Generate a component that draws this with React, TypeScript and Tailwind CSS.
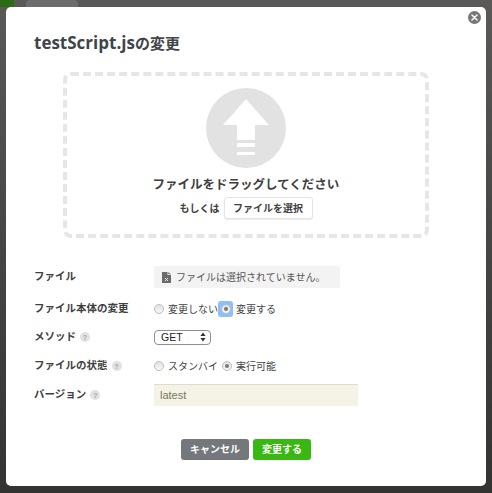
const jp = "font-['Liberation_Sans','Noto_Sans_CJK_JP',sans-serif]";

function Help() {
  return (
    <span className="ml-[4px] inline-flex h-[10px] w-[10px] items-center justify-center rounded-full bg-[#e2e2e2] text-[7px] font-bold leading-none text-[#a8a8a8]">
      ?
    </span>
  );
}

function Radio({ checked }: { checked?: boolean }) {
  return (
    <span className="flex h-[10px] w-[10px] shrink-0 items-center justify-center rounded-full border border-[#bdbdbd] bg-gradient-to-b from-[#e2e2e2] to-[#f8f8f8]">
      {checked && <span className="h-[4px] w-[4px] rounded-full bg-[#777777]" />}
    </span>
  );
}

function Row({ label, help, h, children }: { label: string; help?: boolean; h: string; children: React.ReactNode }) {
  return (
    <div className={`flex items-center ${h}`}>
      <div className="flex w-[120px] shrink-0 items-center text-[10.5px] font-bold text-[#3f3f3f]">
        {label}
        {help && <Help />}
      </div>
      {children}
    </div>
  );
}

export default function App() {
  return (
    <div className={`h-[493px] w-[492px] overflow-hidden bg-gradient-to-b from-[#5a5957] to-[#333331] ${jp}`}>
      {/* page behind the dialog */}
      <div className="flex h-[7px] items-start">
        <div className="h-[7px] w-[14px] bg-[#2c6a14]" />
        <div className="ml-[12px] h-[7px] w-[52px] rounded-t bg-[#6d6c6a]" />
      </div>

      <div className="relative mx-[6px] h-[479px] w-[480px] rounded-[5px] bg-white">
        {/* close */}
        <button className="absolute right-[5px] top-[4px] flex h-[13px] w-[13px] items-center justify-center rounded-full bg-[#777777]">
          <svg width="7" height="7" viewBox="0 0 7 7">
            <path d="M1 1l5 5M6 1L1 6" stroke="#f4f4f4" strokeWidth="1.6" strokeLinecap="round" />
          </svg>
        </button>

        <div className="px-[28px] pt-[26px]">
          <h1 className="font-['Open_Sans','Noto_Sans_CJK_JP',sans-serif] text-[15px] font-bold leading-[20px] text-[#3f454b]">
            <span className="text-[17px]">testScript.js</span>の変更
          </h1>

          {/* drop area */}
          <div className="ml-[29px] mt-[19px] flex h-[166px] w-[366px] flex-col items-center rounded-[8px] border-[4px] border-dashed border-[#e6e6e6] pt-[12px]">
            <svg width="80" height="80" viewBox="0 0 80 80" className="shrink-0">
              <circle cx="40" cy="40" r="40" fill="#e2e2e2" />
              <path d="M40 11L63 37H49V52H31V37H17Z" fill="#fff" />
              <rect x="31" y="55" width="18" height="4" fill="#fff" />
              <rect x="31" y="64" width="18" height="3" fill="#fff" />
            </svg>
            <p className="mt-[9px] text-[12.5px] font-bold leading-[16px] text-[#3f3f3f]">ファイルをドラッグしてください</p>
            <div className="mt-[4px] flex items-center gap-[4px]">
              <span className="text-[10px] font-bold text-[#3f3f3f]">もしくは</span>
              <button className="h-[22px] w-[89px] rounded-[3px] border border-[#e4e4e4] bg-white text-[10px] font-bold text-[#3f3f3f] shadow-[0_1px_1px_rgba(0,0,0,0.08)]">
                ファイルを選択
              </button>
            </div>
          </div>

          {/* form */}
          <div className="mt-[28px] flex flex-col">
            <Row label="ファイル" h="h-[22px]">
              <div className="flex h-[22px] w-[186px] items-center gap-[5px] rounded-[2px] bg-[#f3f3f3] pl-[8px] text-[10px] text-[#555555]">
                <svg width="9" height="11" viewBox="0 0 9 11" className="shrink-0">
                  <path d="M0 0H5.5V3H9V11H0Z" fill="#6b6b6b" />
                  <path d="M6.3 0L9 2.3H6.3Z" fill="#6b6b6b" />
                  <path d="M3 6l3 3M6 6L3 9" stroke="#f3f3f3" strokeWidth="0.9" />
                </svg>
                ファイルは選択されていません。
              </div>
            </Row>

            <Row label="ファイル本体の変更" h="mt-[10px] h-[22px]">
              <div className="flex items-center text-[10px] text-[#444444]">
                <Radio />
                <span className="ml-[4px]">変更しない</span>
                <span className="flex h-[16px] w-[15px] items-center justify-center rounded-[3px] bg-[#8dbff8]">
                  <Radio checked />
                </span>
                <span className="ml-[3px]">変更する</span>
              </div>
            </Row>

            <Row label="メソッド" help h="mt-[6px] h-[22px]">
              <div className="flex h-[15px] w-[57px] items-center justify-between rounded-[4px] border border-[#8f8f8f] bg-white pl-[6px] pr-[4px] text-[10.5px] leading-none text-[#222222]">
                GET
                <svg width="6" height="10" viewBox="0 0 6 10">
                  <path d="M3 0.5L5.6 4H0.4ZM3 9.5L0.4 6H5.6Z" fill="#333333" />
                </svg>
              </div>
            </Row>

            <Row label="ファイルの状態" help h="mt-[7px] h-[22px]">
              <div className="flex items-center text-[10px] text-[#444444]">
                <Radio />
                <span className="ml-[4px]">スタンバイ</span>
                <span className="ml-[4px]"><Radio checked /></span>
                <span className="ml-[4px]">実行可能</span>
              </div>
            </Row>

            <Row label="バージョン" help h="mt-[7px] h-[22px]">
              <div className="flex h-[22px] w-[204px] items-center border-t border-[#dedbd0] bg-[#f5f2e6] pl-[6px] text-[11px] text-[#77775a]">
                latest
              </div>
            </Row>
          </div>

          {/* actions */}
          <div className="mt-[33px] flex justify-center gap-[4px]">
            <button className="h-[21px] w-[68px] rounded-[3px] bg-[#74787c] text-[10px] font-bold text-white">キャンセル</button>
            <button className="h-[21px] w-[58px] rounded-[3px] bg-[#39b813] text-[10px] font-bold text-white">変更する</button>
          </div>
        </div>
      </div>
    </div>
  );
}
